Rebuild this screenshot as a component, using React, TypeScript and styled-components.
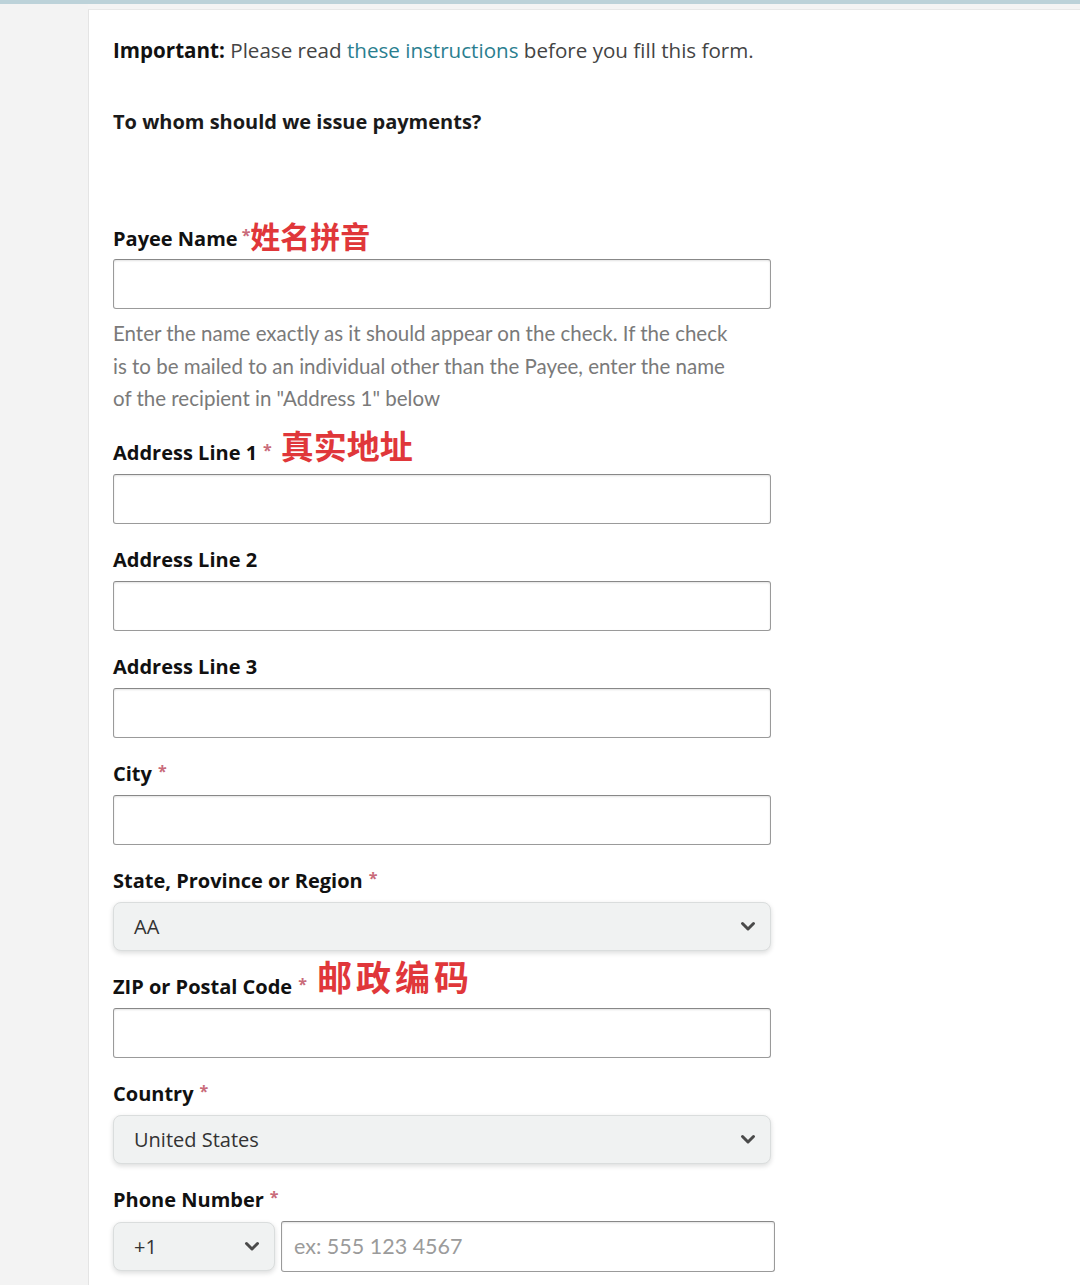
import React, { FC } from 'react'
import styled, { createGlobalStyle } from 'styled-components'

const GlobalStyle = createGlobalStyle`
  body {
    margin: 0;
    background: #f4f4f4;
    font-family: "Open Sans", "Noto Sans", "Noto Sans CJK SC", sans-serif;
    color: #111;
  }
`

const TopStrip = styled.div`
  height: 4px;
  background: #bcd2d9;
`

const Layout = styled.div`
  display: flex;
  min-height: 1281px;
`

const Sidebar = styled.div`
  width: 88px;
  background: #f3f3f3;
`

const Panel = styled.main`
  flex: 1;
  margin-top: 5px;
  background: #fff;
  border-left: 1px solid #e4e4e4;
  border-top: 1px solid #e8e8e8;
  padding: 26px 0 0 24px;
`

const Notice = styled.p`
  margin: 0;
  font-size: 20.6px;
  line-height: 28px;
  color: #444;

  strong {
    color: #111;
    font-weight: 700;
  }
`

const Link = styled.a`
  color: #2a7e8f;
  text-decoration: none;
`

const Question = styled.h2`
  margin: 44px 0 0;
  font-size: 20px;
  line-height: 28px;
  font-weight: 700;
  color: #1a1a1a;
`

const Form = styled.form`
  width: 662px;
  margin-top: 88px;
`

const Field = styled.div`
  margin-bottom: 22px;
`

const LabelRow = styled.label`
  display: flex;
  align-items: center;
  height: 28px;
  margin-bottom: 7px;
  font-size: 20px;
  font-weight: 700;
  color: #111;
  white-space: nowrap;
`

const Required = styled.span<{ $tight?: boolean }>`
  margin-left: ${({ $tight }) => ($tight ? 4 : 6)}px;
  align-self: flex-start;
  font-size: 16px;
  color: #c96b7a;
`

const Note = styled.span<{ $size: number; $spacing?: number; $gap: number; $lift: number }>`
  margin-left: ${({ $gap }) => $gap}px;
  margin-bottom: ${({ $lift }) => $lift * 2}px;
  font-family: "Noto Sans CJK SC", sans-serif;
  font-size: ${({ $size }) => $size}px;
  letter-spacing: ${({ $spacing = 0 }) => $spacing}px;
  font-weight: 700;
  color: #e0373a;
  line-height: 1;
`

const TextInput = styled.input`
  box-sizing: border-box;
  display: block;
  width: 658px;
  height: 50px;
  margin: 0;
  padding: 0 13px;
  border: 1px solid #9a9a9a;
  border-top-color: #888;
  border-radius: 3px;
  box-shadow: inset 0 1px 2px rgba(15, 17, 17, 0.12);
  font-family: "Open Sans", "Noto Sans", sans-serif;
  font-size: 19px;
  color: #111;
  background: #fff;

  &::placeholder {
    color: #9b9b9b;
  }
`

const Help = styled.p`
  margin: 8px 0 24px;
  font-family: Lato, "Noto Sans", sans-serif;
  font-size: 20.5px;
  line-height: 32.5px;
  color: #7a7a7a;
`

const SelectBox = styled.div<{ $width: number }>`
  box-sizing: border-box;
  display: flex;
  align-items: center;
  justify-content: space-between;
  width: ${({ $width }) => $width}px;
  height: 49px;
  padding: 0 14px 0 20px;
  background: #f0f2f2;
  border: 1px solid #dadddd;
  border-radius: 8px;
  box-shadow: 0 2px 5px rgba(15, 17, 17, 0.15);
  font-size: 20px;
  color: #333;
`

const PhoneRow = styled.div`
  display: flex;
  gap: 6px;
  align-items: center;
`

const PhoneInput = styled(TextInput)`
  width: 494px;
  height: 51px;
  padding-left: 12px;
  font-family: Lato, "Noto Sans", sans-serif;
  font-size: 21.5px;
`

const Chevron: FC = () => (
  <svg width="16" height="12" viewBox="0 0 16 12" aria-hidden>
    <path d="M2.5 3.5 L8 9 L13.5 3.5" fill="none" stroke="#4a4a4a" strokeWidth="3" strokeLinecap="round" strokeLinejoin="round" />
  </svg>
)

type LabelProps = {
  text: string
  required?: boolean
  tight?: boolean
  note?: string
  noteSize?: number
  noteSpacing?: number
  noteGap?: number
  noteLift?: number
}

const Label: FC<LabelProps> = ({
  text,
  required,
  tight,
  note,
  noteSize = 30,
  noteSpacing,
  noteGap = 6,
  noteLift = 0,
}) => (
  <LabelRow>
    {text}
    {required && <Required $tight={tight}>*</Required>}
    {note && (
      <Note $size={noteSize} $spacing={noteSpacing} $gap={noteGap} $lift={noteLift}>
        {note}
      </Note>
    )}
  </LabelRow>
)

export default function App() {
  return (
    <>
      <GlobalStyle />
      <TopStrip />
      <Layout>
        <Sidebar />
        <Panel>
          <Notice>
            <strong>Important:</strong> Please read <Link href="#">these instructions</Link> before you fill this form.
          </Notice>
          <Question>To whom should we issue payments?</Question>

          <Form>
            <div>
              <Label text="Payee Name" required tight note="姓名拼音" noteSize={30} noteGap={0} noteLift={3} />
              <TextInput />
              <Help>
                Enter the name exactly as it should appear on the check. If the check
                <br />
                is to be mailed to an individual other than the Payee, enter the name
                <br />
                of the recipient in "Address 1" below
              </Help>
            </div>
            <Field>
              <Label text="Address Line 1" required note="真实地址" noteSize={33} noteGap={9} noteLift={7} />
              <TextInput />
            </Field>
            <Field>
              <Label text="Address Line 2" />
              <TextInput />
            </Field>
            <Field>
              <Label text="Address Line 3" />
              <TextInput />
            </Field>
            <Field>
              <Label text="City" required />
              <TextInput />
            </Field>
            <Field>
              <Label text="State, Province or Region" required />
              <SelectBox $width={658}>
                AA
                <Chevron />
              </SelectBox>
            </Field>
            <Field>
              <Label
                text="ZIP or Postal Code"
                required
                note="邮政编码"
                noteSize={35}
                noteSpacing={4}
                noteGap={10}
                noteLift={11}
              />
              <TextInput />
            </Field>
            <Field>
              <Label text="Country" required />
              <SelectBox $width={658}>
                United States
                <Chevron />
              </SelectBox>
            </Field>
            <Field>
              <Label text="Phone Number" required />
              <PhoneRow>
                <SelectBox $width={162}>
                  +1
                  <Chevron />
                </SelectBox>
                <PhoneInput placeholder="ex: 555 123 4567" />
              </PhoneRow>
            </Field>
          </Form>
        </Panel>
      </Layout>
    </>
  )
}
